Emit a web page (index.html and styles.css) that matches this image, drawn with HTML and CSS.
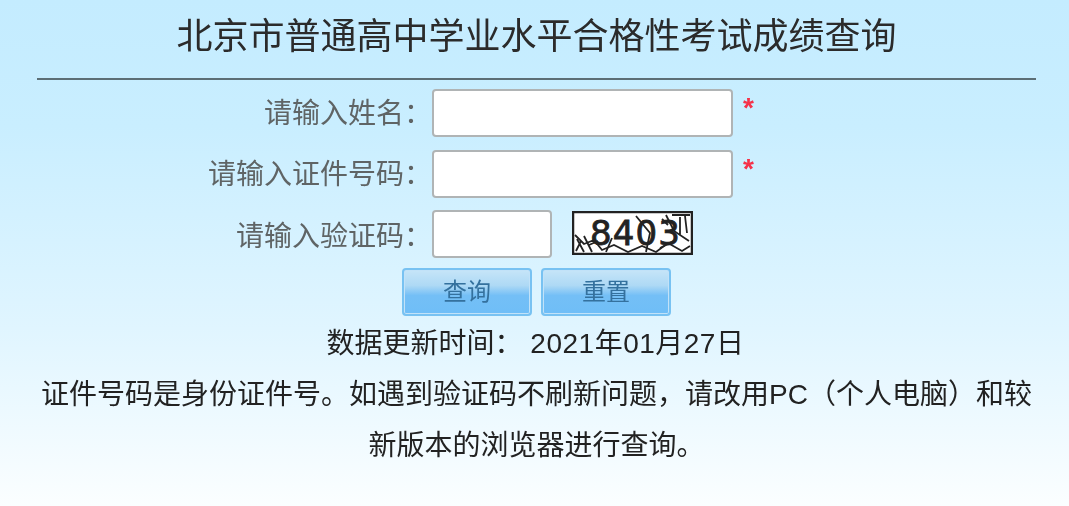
FILE: index.html
```html
<!DOCTYPE html>
<html lang="zh-CN">

<head>
  <meta charset="UTF-8" />
  <title>北京市普通高中学业水平合格性考试成绩查询</title>
  <link rel="stylesheet" href="styles.css">
</head>

<body>
  <div class="page">
    <h1 class="title">北京市普通高中学业水平合格性考试成绩查询</h1>

    <form class="query-form">
      <div class="row">
        <label class="row-label">请输入姓名：</label>
        <input class="field" type="text" />
        <span class="required">*</span>
      </div>
      <div class="row">
        <label class="row-label">请输入证件号码：</label>
        <input class="field" type="text" />
        <span class="required">*</span>
      </div>
      <div class="row row-captcha">
        <label class="row-label">请输入验证码：</label>
        <input class="field field-short" type="text" />
        <svg class="captcha" width="121" height="44" viewBox="0 0 121 44">
          <rect x="1" y="1" width="119" height="42" fill="#fff" stroke="#222" stroke-width="2.5" />
          <g fill="none" stroke="#222" stroke-width="1.8">
            <path d="M3 24 L12 33 L22 29 L30 39 L42 34 L56 41 L70 35 L84 41 L96 32 L110 40 L118 35" />
            <path d="M5 28 L12 41 M9 30 L4 40 M12 25 L20 41 M17 34 L26 30 M40 27 L34 41 M64 5 L78 22 L74 41" />
            <path d="M94 4 L102 20 L117 30 M108 6 L108 24 M113 5 L115 22 M88 37 L104 29 M100 4 L118 4 M90 8 L96 14" />
          </g>
          <text class="captcha-text" x="18" y="34" textLength="90">8403</text>
        </svg>
      </div>
      <div class="actions">
        <button class="btn" type="button">查询</button>
        <button class="btn" type="reset">重置</button>
      </div>
    </form>

    <p class="update">数据更新时间： <span class="update-date">2021年01月27日</span></p>
    <p class="note">证件号码是身份证件号。如遇到验证码不刷新问题，请改用PC（个人电脑）和较新版本的浏览器进行查询。</p>
  </div>
</body>

</html>
```

FILE: styles.css
```css
html {
  height: 100%;
}

body {
  margin: 0;
  height: 506px;
  overflow: hidden;
  background: linear-gradient(#c4ecff 0%, #c9eeff 25%, #e0f5ff 65%, #fbfeff 100%);
  font-family: "Liberation Sans", "Noto Sans CJK SC", sans-serif;
  color: #222;
}

.page {
  padding: 0 33px 0 37px;
  filter: blur(0.7px);
}

.title {
  margin: 0;
  height: 78px;
  border-bottom: 2px solid #5c6e75;
  font-size: 36px;
  font-weight: normal;
  line-height: 74px;
  text-align: center;
  color: #2b2b2b;
}

.query-form {
  display: flex;
  flex-direction: column;
  padding-top: 9px;
}

.row {
  display: flex;
  align-items: flex-start;
  height: 60.5px;
}

.row-label {
  width: 395px;
  height: 48px;
  font-size: 28px;
  line-height: 50px;
  text-align: right;
  color: #5f6465;
}

.row-captcha .row-label {
  line-height: 53px;
}

.field {
  box-sizing: border-box;
  width: 301px;
  height: 48px;
  margin: 0;
  background: #fff;
  border: 2px solid #b0b4b5;
  border-radius: 4px;
}

.field-short {
  width: 120px;
}

.required {
  margin-left: 10px;
  font-family: "Liberation Sans", sans-serif;
  font-size: 28px;
  font-weight: bold;
  line-height: 38px;
  color: #f5324a;
}

.captcha {
  margin: 1px 0 0 20px;
}

.captcha-text {
  font-family: "DejaVu Sans", sans-serif;
  font-size: 34px;
  fill: #222;
  stroke: #222;
  stroke-width: 0.8;
}

.actions {
  display: flex;
  gap: 9px;
  padding: 0 0 0 365px;
  margin-top: -3px;
}

.btn {
  box-sizing: border-box;
  width: 130px;
  height: 48px;
  padding: 0 0 5px;
  border: 2px solid #78c2f2;
  border-radius: 4px;
  background: linear-gradient(#c6e5f8 0%, #aed9f5 35%, #74bff6 58%, #6fbef7 100%);
  box-shadow: inset 0 0 0 1px #c2e2f8;
  font-family: inherit;
  font-size: 24px;
  color: #34719e;
}

.update {
  margin: 3px 0 0;
  padding-right: 2px;
  font-size: 28px;
  line-height: 50px;
  text-align: center;
}

.update-date {
  letter-spacing: 0.5px;
}

.note {
  margin: 0;
  font-size: 28px;
  line-height: 51px;
  text-align: center;
}
```
